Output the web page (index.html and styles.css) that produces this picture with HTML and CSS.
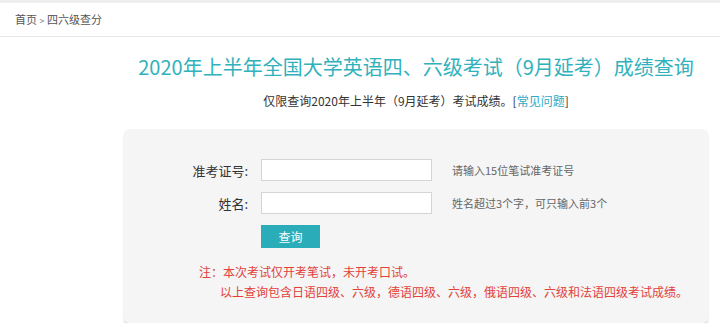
FILE: index.html
```html
<!DOCTYPE html>
<html>
<head>
  <meta charset="utf-8">
  <title>四六级查分</title>
  <link rel="stylesheet" href="styles.css">
</head>
<body>
  <div class="topline"></div>
  <div class="crumb">首页 <span class="sep">&gt;</span> 四六级查分</div>

  <div class="main">
    <h1>2020年上半年全国大学英语四、六级考试（9月延考）成绩查询</h1>
    <p class="sub">仅限查询2020年上半年（9月延考）考试成绩。[<a href="#">常见问题</a>]</p>

    <div class="card">
      <div class="row">
        <label class="label">准考证号:</label>
        <input class="input" type="text">
        <span class="hint">请输入15位笔试准考证号</span>
      </div>
      <div class="row">
        <label class="label">姓名:</label>
        <input class="input" type="text">
        <span class="hint">姓名超过3个字，可只输入前3个</span>
      </div>
      <button class="btn">查询</button>
      <div class="note">
        <div>注：本次考试仅开考笔试，未开考口试。</div>
        <div class="indent">以上查询包含日语四级、六级，德语四级、六级，俄语四级、六级和法语四级考试成绩。</div>
      </div>
    </div>
  </div>
</body>
</html>
```

FILE: styles.css
```css
body {
  margin: 0;
  font-family: "Noto Sans CJK SC", "Liberation Sans", sans-serif;
  font-size: 12px;
  color: #333;
  background: #ffffff;
}

.topline {
  height: 3px;
  background: #eeeeee;
}

.crumb {
  height: 33px;
  line-height: 33px;
  padding-left: 15px;
  color: #555;
  font-size: 11px;
  border-bottom: 1px solid #e6e6e6;
}

.sep {
  font-size: 9px;
  color: #777;
}

.main {
  margin-left: 124px;
  width: 584px;
}

h1 {
  margin: 15px 0 0;
  font-size: 20px;
  font-weight: normal;
  line-height: 30px;
  text-align: center;
  color: #31b1bc;
}

.sub {
  margin: 9px 0 0;
  line-height: 20px;
  text-align: center;
  color: #333;
}

.sub a {
  color: #31a9c4;
  text-decoration: none;
}

.card {
  margin-top: 18px;
  padding: 30px 0 21px;
  background: #f5f5f5;
  border-radius: 5px;
  box-shadow: 0 2px 2px #d6d6d6;
}

.row {
  display: flex;
  align-items: center;
  height: 22px;
  margin-bottom: 11px;
}

.label {
  width: 124px;
  text-align: right;
  font-size: 13px;
  color: #333;
}

.input {
  box-sizing: border-box;
  width: 171px;
  height: 22px;
  margin: 0 20px 0 13px;
  border: 1px solid #d4d4d4;
  background: #fff;
  padding: 0 4px;
}

.hint {
  font-size: 11px;
  color: #666;
}

.btn {
  display: block;
  margin-left: 137px;
  width: 59px;
  height: 23px;
  padding: 0;
  border: none;
  background: #2badb9;
  color: #fff;
  font-family: inherit;
  font-size: 12px;
}

.note {
  margin-top: 14px;
  padding-left: 75px;
  line-height: 20px;
  color: #e2413b;
}

.indent {
  padding-left: 21px;
}
```
